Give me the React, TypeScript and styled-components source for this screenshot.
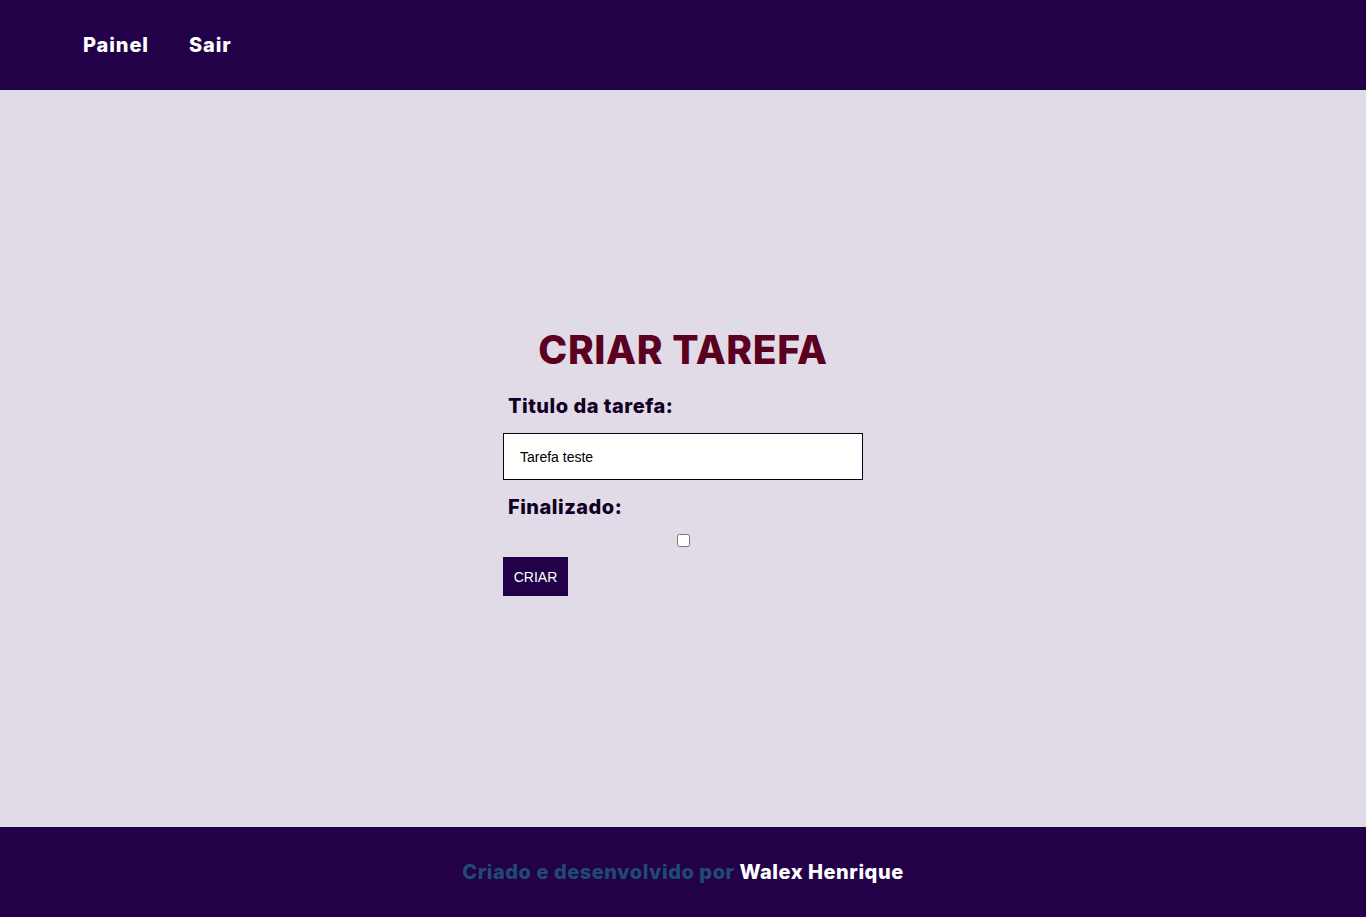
import React from "react";
import styled, { createGlobalStyle } from "styled-components";

const Global = createGlobalStyle`
  html, body { margin: 0; padding: 0; }
  body { font-family: "Liberation Sans", Arial, sans-serif; background: #e1dbe7; }
  * { box-sizing: border-box; }
`;

const Page = styled.div`
  min-height: 917px;
  display: flex;
  flex-direction: column;
`;

const Header = styled.header`
  height: 90px;
  background: #220149;
  display: flex;
  align-items: center;
  padding-left: 83px;
  gap: 40px;
`;

const NavLink = styled.a`
  font-family: Inter, "Open Sans", sans-serif;
  font-weight: 800;
  font-size: 20px;
  color: #ffffff;
  text-decoration: none;
  letter-spacing: 0.9px;
  cursor: pointer;
`;

const Main = styled.main`
  flex: 1;
  display: flex;
  align-items: center;
  justify-content: center;
  background: #e1dbe7;
`;

const Form = styled.form`
  width: 360px;
  display: flex;
  flex-direction: column;
  padding-top: 6px;
`;

const Title = styled.h1`
  margin: 0 0 19px;
  text-align: center;
  font-family: Inter, "Open Sans", sans-serif;
  font-weight: 800;
  font-size: 39px;
  line-height: 46px;
  letter-spacing: 0.6px;
  color: #5b0020;
`;

const Label = styled.label`
  font-family: Inter, "Open Sans", sans-serif;
  font-weight: 800;
  font-size: 20px;
  line-height: 28px;
  letter-spacing: 0.5px;
  color: #120024;
  padding-left: 5px;
  margin-bottom: 13px;
`;

const TextInput = styled.input`
  width: 360px;
  height: 47px;
  border: 1px solid #0c0018;
  background: #ffffff;
  padding: 0 16px;
  font-family: "Liberation Sans", Arial, sans-serif;
  font-size: 14px;
  color: #000;
  outline: none;
  margin-bottom: 13px;
`;

const CheckRow = styled.div`
  display: flex;
  justify-content: center;
  margin-top: -3px;
  margin-bottom: 7px;
`;

const Check = styled.input`
  width: 13px;
  height: 13px;
  margin: 3px;
`;

const Button = styled.button`
  align-self: flex-start;
  width: 65px;
  height: 39px;
  background: #220149;
  color: #ffffff;
  border: none;
  font-family: "Liberation Sans", Arial, sans-serif;
  font-size: 14px;
  cursor: pointer;
`;

const Footer = styled.footer`
  height: 90px;
  background: #220149;
  display: flex;
  align-items: center;
  justify-content: center;
  font-family: Inter, "Open Sans", sans-serif;
  font-weight: 800;
  font-size: 20px;
  letter-spacing: 0.55px;
`;

const Muted = styled.span`
  color: #1f4a75;
`;

const Author = styled.span`
  color: #ffffff;
`;

export default function App() {
  return (
    <Page>
      <Global />
      <Header>
        <NavLink>Painel</NavLink>
        <NavLink>Sair</NavLink>
      </Header>
      <Main>
        <Form onSubmit={(e) => e.preventDefault()}>
          <Title>CRIAR TAREFA</Title>
          <Label htmlFor="titulo">Titulo da tarefa:</Label>
          <TextInput id="titulo" defaultValue="Tarefa teste" />
          <Label htmlFor="fin">Finalizado:</Label>
          <CheckRow>
            <Check id="fin" type="checkbox" />
          </CheckRow>
          <Button type="submit">CRIAR</Button>
        </Form>
      </Main>
      <Footer>
        <Muted>Criado e desenvolvido por&nbsp;</Muted>
        <Author>Walex Henrique</Author>
      </Footer>
    </Page>
  );
}
